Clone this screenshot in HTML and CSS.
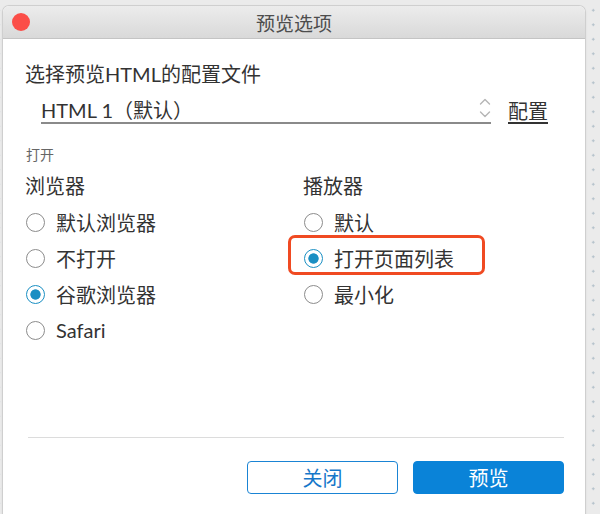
FILE: index.html
```html
<!DOCTYPE html>
<html lang="zh-CN">
<head>
    <meta charset="UTF-8">
    <title>预览选项</title>
    <link rel="stylesheet" href="styles.css">
</head>
<body>
    <div class="window">
        <div class="titlebar">
            <span class="close"></span>
            <span class="title">预览选项</span>
        </div>

        <div class="content">
            <div class="label">选择预览HTML的配置文件</div>

            <div class="select-row">
                <div class="select">
                    <span>HTML 1（默认）</span>
                    <svg class="chevron" width="12" height="22" viewBox="0 0 12 22">
                        <path d="M1.5 7 L6 2.5 L10.5 7" fill="none" stroke="#b5b5b5" stroke-width="1.4" stroke-linecap="round" stroke-linejoin="round"/>
                        <path d="M1.5 15 L6 19.5 L10.5 15" fill="none" stroke="#b5b5b5" stroke-width="1.4" stroke-linecap="round" stroke-linejoin="round"/>
                    </svg>
                </div>
                <a class="link">配置</a>
            </div>

            <div class="section">打开</div>

            <div class="columns">
                <div class="col">
                    <div class="col-title">浏览器</div>
                    <div class="radio"><span class="dot"></span>默认浏览器</div>
                    <div class="radio"><span class="dot"></span>不打开</div>
                    <div class="radio"><span class="dot checked"></span>谷歌浏览器</div>
                    <div class="radio"><span class="dot"></span>Safari</div>
                </div>
                <div class="col">
                    <div class="col-title">播放器</div>
                    <div class="radio"><span class="dot"></span>默认</div>
                    <div class="radio marked"><span class="dot checked"></span>打开页面列表</div>
                    <div class="radio"><span class="dot"></span>最小化</div>
                </div>
            </div>

            <div class="footer">
                <div class="sep"></div>
                <div class="buttons">
                    <button class="btn">关闭</button>
                    <button class="btn primary">预览</button>
                </div>
            </div>
        </div>
    </div>
</body>
</html>
```

FILE: styles.css
```css
html, body {
    margin: 0;
    height: 514px;
    overflow: hidden;
}
body {
    font-family: "Lato", "Noto Sans CJK SC", sans-serif;
    color: #333;
    background-color: #ebebeb;
    background-image: radial-gradient(circle, #b3c1ca 1px, transparent 1.3px);
    background-size: 14.5px 14.5px;
    background-position: 6px 3px;
    padding: 6px 15px 0 3px;
}
.window {
    width: 582px;
    height: 520px;
    background: #fff;
    border-radius: 6px 6px 0 0;
    box-shadow: 0 0 0 1px #cfcfcf, 0 1px 3px rgba(0, 0, 0, 0.15);
    overflow: hidden;
}
.titlebar {
    position: relative;
    height: 32px;
    display: flex;
    align-items: center;
    justify-content: center;
    background: linear-gradient(#ececec, #d9d9d9);
    border-bottom: 1px solid #c4c4c4;
}
.close {
    position: absolute;
    left: 9px;
    top: 7px;
    width: 18px;
    height: 18px;
    border-radius: 50%;
    background: #fb4e48;
}
.title {
    font-size: 19px;
    color: #4d4d4d;
}
.content {
    height: 475px;
    box-sizing: border-box;
    padding: 23px 21px 20px 22px;
    display: flex;
    flex-direction: column;
}
.label {
    font-size: 20px;
    line-height: 24px;
}
.select-row {
    display: flex;
    align-items: center;
    margin: 12px 0 0 16px;
}
.select {
    width: 450px;
    display: flex;
    align-items: center;
    justify-content: space-between;
    font-size: 20px;
    line-height: 24px;
    border-bottom: 2px solid #8a8a8a;
}
.chevron {
    margin: -4px 0 0 0;
}
.link {
    margin-left: 17px;
    font-size: 20px;
    line-height: 24px;
    text-decoration: underline;
    text-underline-offset: 3px;
}
.section {
    margin: 22px 0 0 1px;
    font-size: 14px;
    line-height: 18px;
    color: #666;
}
.columns {
    display: flex;
    margin-top: 10px;
}
.col {
    width: 278px;
    flex-shrink: 0;
}
.col + .col {
    flex: 1;
}
.col-title {
    font-size: 20px;
    line-height: 24px;
    margin-bottom: 6px;
}
.radio {
    position: relative;
    height: 36px;
    display: flex;
    align-items: center;
    font-size: 20px;
}
.dot {
    width: 17px;
    height: 17px;
    border: 1.5px solid #8c8c8c;
    border-radius: 50%;
    margin: 0 11px 0 1px;
    flex-shrink: 0;
}
.dot.checked {
    border-color: #1a8fc3;
    background: radial-gradient(circle, #1a8fc3 4.8px, #fff 5.5px);
}
.radio.marked::after {
    content: "";
    position: absolute;
    left: -15px;
    top: -5px;
    width: 191px;
    height: 34px;
    border: 3px solid #f04a22;
    border-radius: 7px;
}
.footer {
    margin-top: auto;
}
.sep {
    height: 1px;
    background: #dcdcdc;
    margin: 0 0 23px 3px;
}
.buttons {
    display: flex;
    justify-content: flex-end;
    gap: 15px;
}
.btn {
    width: 151px;
    height: 33px;
    font-family: inherit;
    font-size: 20px;
    color: #1677c9;
    background: #fff;
    border: 1px solid #1a84d4;
    border-radius: 4px;
}
.btn.primary {
    color: #fff;
    background: #0a83d8;
    border-color: #0a83d8;
}
```
